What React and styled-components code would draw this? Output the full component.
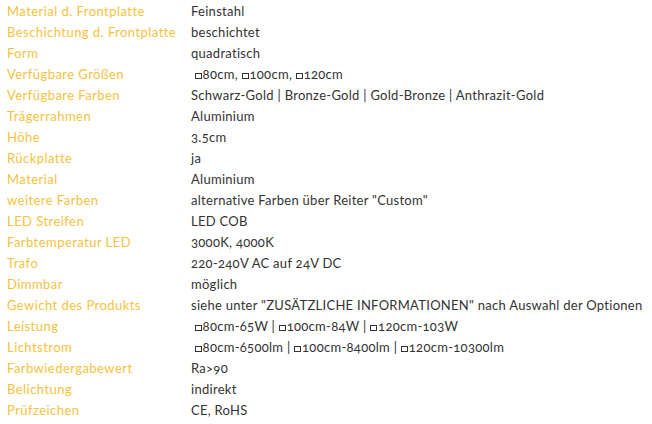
import React from "react";
import styled, { createGlobalStyle } from "styled-components";

const GlobalStyle = createGlobalStyle`
	html, body {
		margin: 0;
		padding: 0;
		background: #ffffff;
	}
`;

const NBSP = "\u00a0";

const SPECS = [
	["Material d. Frontplatte", "Feinstahl"],
	["Beschichtung d. Frontplatte", "beschichtet"],
	["Form", "quadratisch"],
	["Verfügbare Größen", [NBSP, "sq", "80cm, ", "sq", "100cm, ", "sq", "120cm"]],
	["Verfügbare Farben", "Schwarz-Gold | Bronze-Gold | Gold-Bronze | Anthrazit-Gold"],
	["Trägerrahmen", "Aluminium"],
	["Höhe", "3.5cm"],
	["Rückplatte", "ja"],
	["Material", "Aluminium"],
	["weitere Farben", "alternative Farben über Reiter \"Custom\""],
	["LED Streifen", "LED COB"],
	["Farbtemperatur LED", "3000K, 4000K"],
	["Trafo", "220-240V AC auf 24V DC"],
	["Dimmbar", "möglich"],
	["Gewicht des Produkts", "siehe unter \"ZUSÄTZLICHE INFORMATIONEN\" nach Auswahl der Optionen"],
	["Leistung", [NBSP, "sq", "80cm-65W | ", "sq", "100cm-84W | ", "sq", "120cm-103W"]],
	["Lichtstrom", [NBSP, "sq", "80cm-6500lm | ", "sq", "100cm-8400lm | ", "sq", "120cm-10300lm"]],
	["Farbwiedergabewert", "Ra>90"],
	["Belichtung", "indirekt"],
	["Prüfzeichen", "CE, RoHS"],
];

function renderValue(value) {
	if (typeof value === "string") return value;
	return value.map((part, i) =>
		part === "sq" ? <Square key={i} /> : <React.Fragment key={i}>{part}</React.Fragment>
	);
}

export default function App() {
	return (
		<>
			<GlobalStyle />
			<SpecTable>
				{SPECS.map(([label, value]) => (
					<Row key={label}>
						<Label>{label}</Label>
						<Value>{renderValue(value)}</Value>
					</Row>
				))}
			</SpecTable>
		</>
	);
}

const SpecTable = styled.dl`
	margin: 0;
	padding: 0 7px;
	display: flex;
	flex-direction: column;
	font-family: Lato, "Open Sans", sans-serif;
	font-size: 13px;
	letter-spacing: 0.28px;
	font-variant-numeric: oldstyle-nums;
	white-space: nowrap;
`;

const Row = styled.div`
	display: grid;
	grid-template-columns: 184px 1fr;
	height: 21px;
	align-items: center;
`;

const Label = styled.dt`
	color: #f6c23e;
	letter-spacing: 0.45px;
`;

const Value = styled.dd`
	margin: 0;
	color: #333333;
`;

const Square = styled.span`
	display: inline-block;
	width: 5px;
	height: 4px;
	border: 1px solid #333333;
	margin-right: 1px;
	vertical-align: 0;
`;
